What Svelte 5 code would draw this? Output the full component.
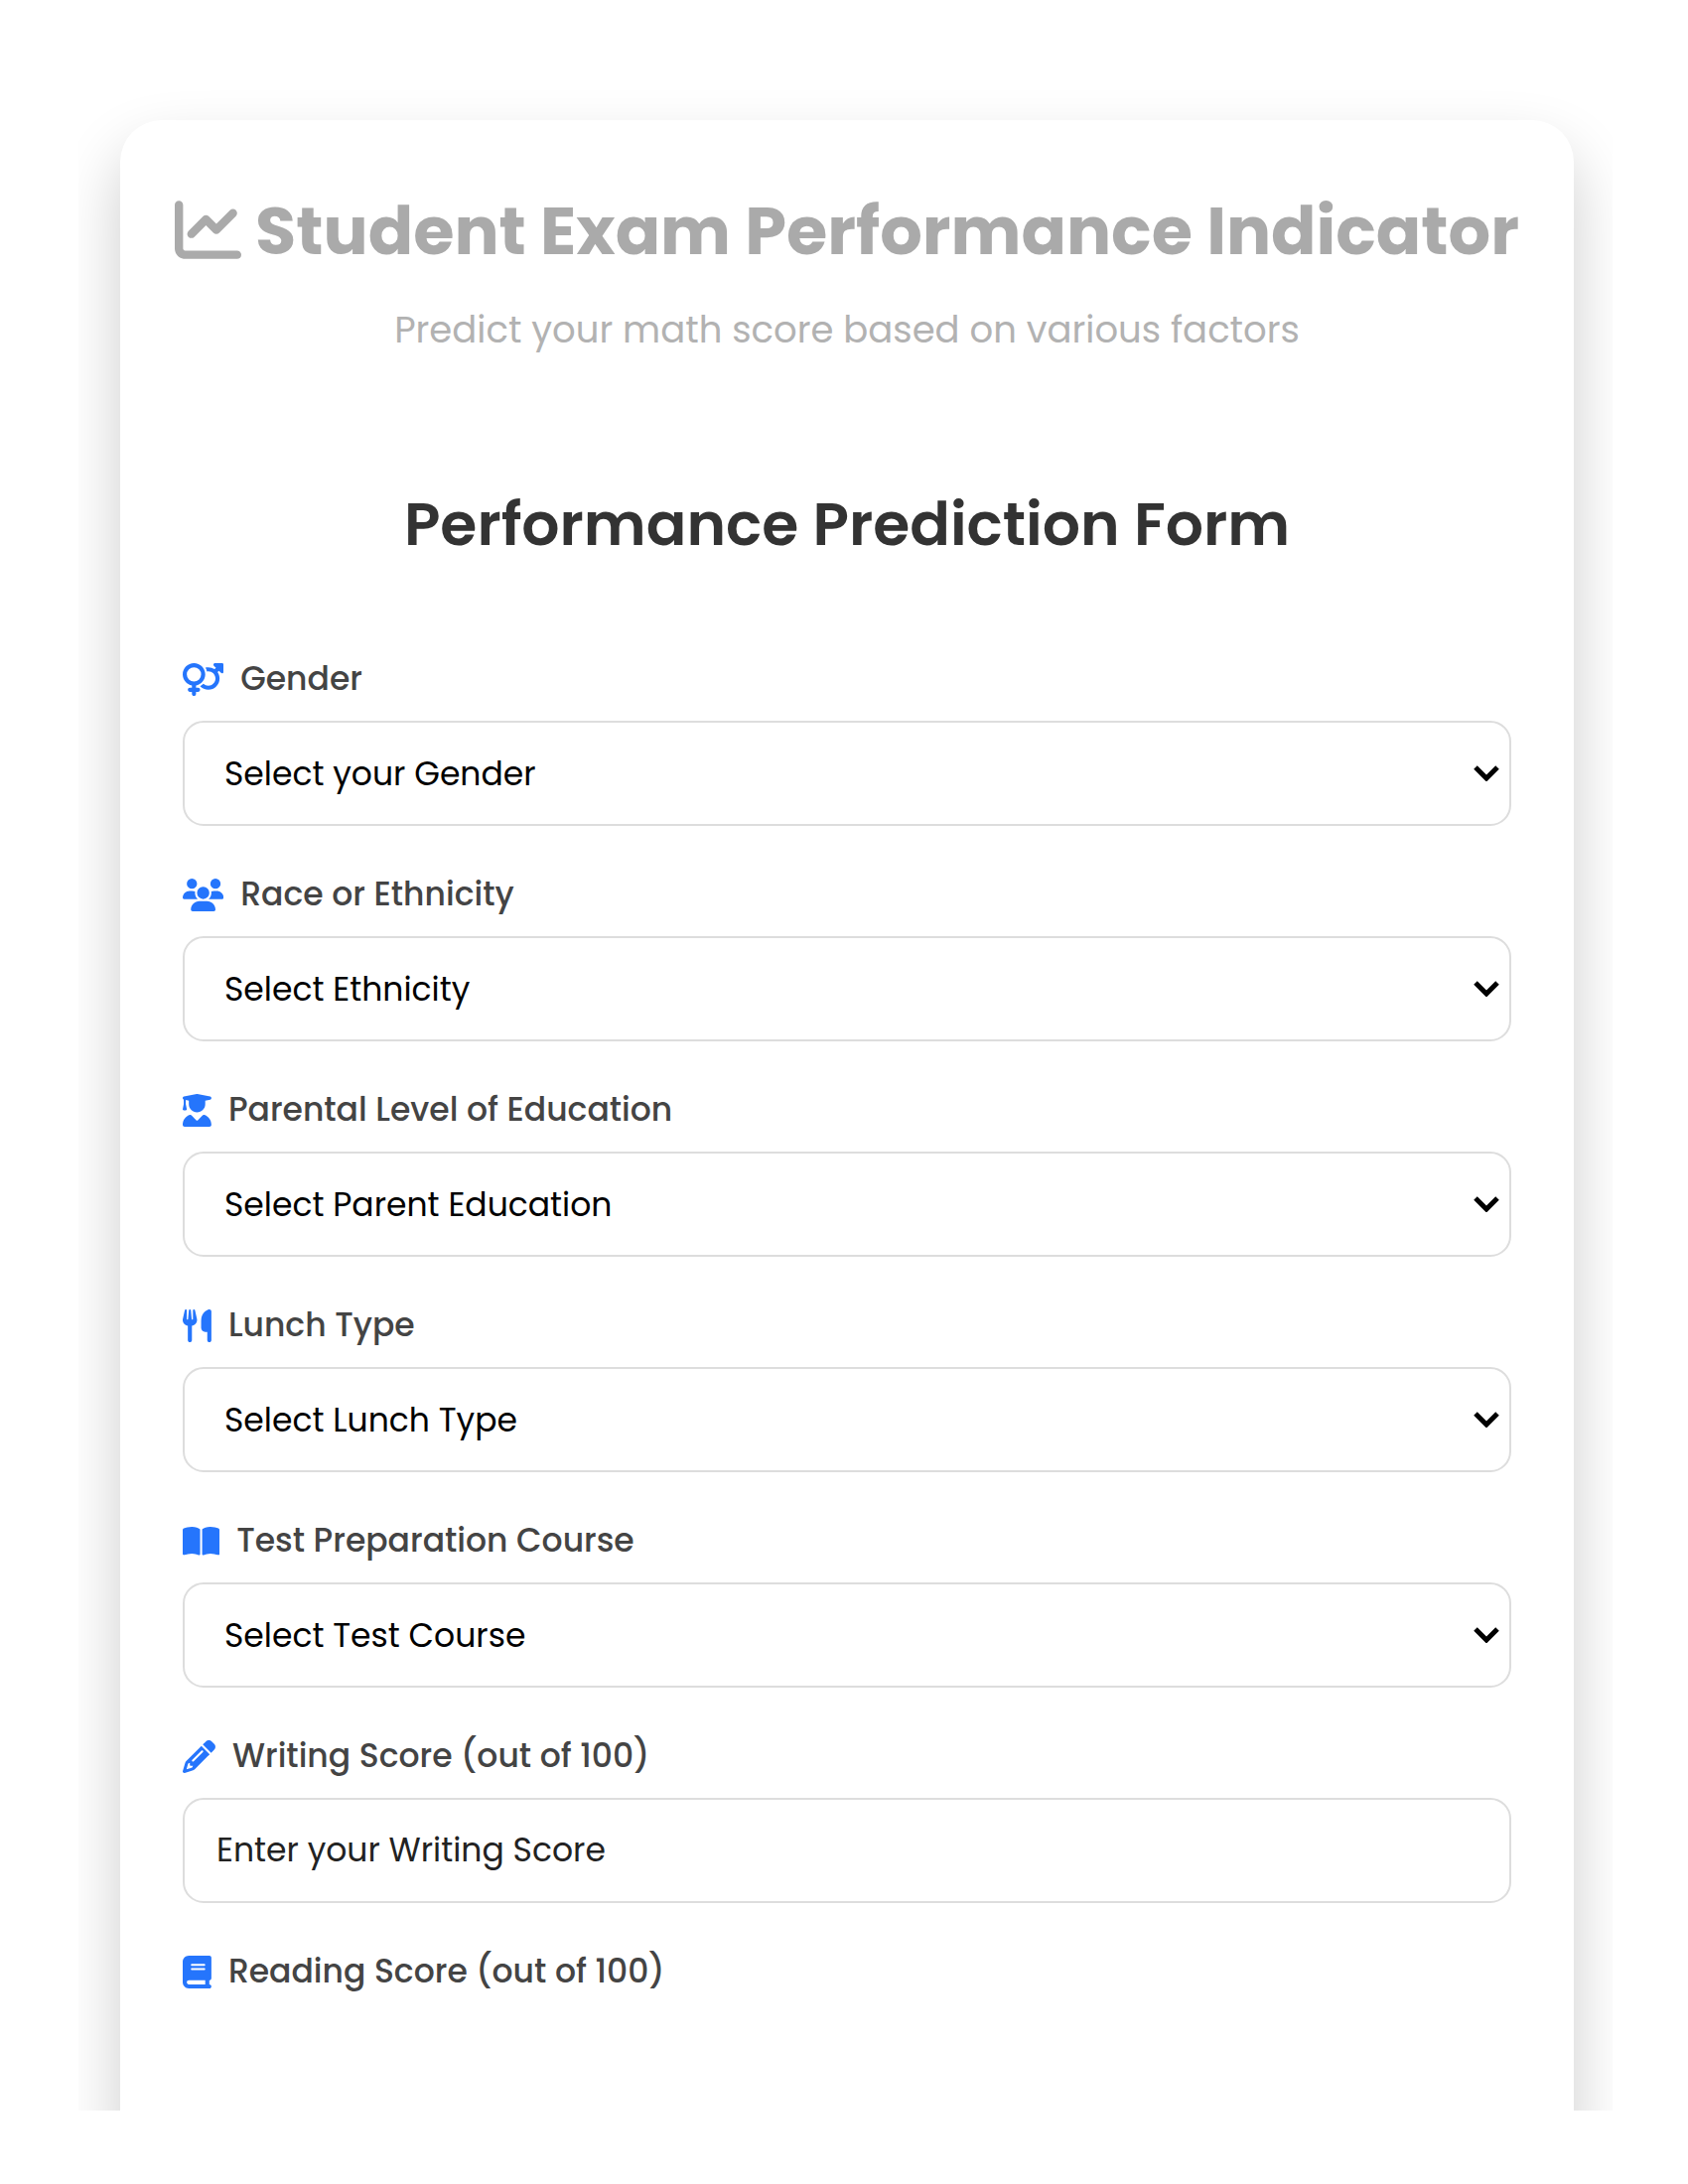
<script>
  const icons = {
    chart: { w: 512, d: 'M64 64c0-17.7-14.3-32-32-32S0 46.3 0 64V400c0 44.2 35.8 80 80 80H480c17.7 0 32-14.3 32-32s-14.3-32-32-32H80c-8.8 0-16-7.2-16-16V64zm406.6 86.6c12.5-12.5 12.5-32.8 0-45.3s-32.8-12.5-45.3 0L320 210.7l-57.4-57.4c-12.5-12.5-32.8-12.5-45.3 0l-112 112c-12.5 12.5-12.5 32.8 0 45.3s32.8 12.5 45.3 0L240 221.3l57.4 57.4c12.5 12.5 32.8 12.5 45.3 0l128-128z' },
    gender: { w: 640, d: 'M176 288a112 112 0 1 0 0-224 112 112 0 1 0 0 224zM352 176c0 86.3-62.1 158.1-144 173.1V384h32c17.7 0 32 14.3 32 32s-14.3 32-32 32H208v32c0 17.7-14.3 32-32 32s-32-14.3-32-32V448H112c-17.7 0-32-14.3-32-32s14.3-32 32-32h32V349.1C62.1 334.1 0 262.3 0 176C0 78.8 78.8 0 176 0s176 78.8 176 176zM271.9 360.6c19.3-10.1 36.9-23.1 52.1-38.4c20 18.5 46.7 29.8 76.1 29.8c61.9 0 112-50.1 112-112s-50.1-112-112-112c-7.2 0-14.3 .7-21.1 2c-4.9-21.5-13-41.7-24-60.2C369.3 66 384.4 64 400 64c37 0 71.4 11.4 99.8 31l20.6-20.6L487 41c-6.9-6.9-8.9-17.2-5.2-26.2S494.3 0 504 0H616c13.3 0 24 10.7 24 24V136c0 9.7-5.8 18.5-14.8 22.2s-19.3 1.7-26.2-5.2l-33.4-33.4L545 140.2c19.5 28.4 31 62.7 31 99.8c0 97.2-78.8 176-176 176c-50.5 0-96-21.3-128.1-55.4z' },
    users: { w: 640, d: 'M144 0a80 80 0 1 1 0 160A80 80 0 1 1 144 0zM512 0a80 80 0 1 1 0 160A80 80 0 1 1 512 0zM0 298.7C0 239.8 47.8 192 106.7 192h42.7c15.9 0 31 3.5 44.6 9.7c-1.3 7.2-1.9 14.7-1.9 22.3c0 38.2 16.8 72.5 43.3 96c-.2 0-.4 0-.7 0H21.3C9.6 320 0 310.4 0 298.7zM405.3 320c-.2 0-.4 0-.7 0c26.6-23.5 43.3-57.8 43.3-96c0-7.6-.7-15-1.9-22.3c13.6-6.3 28.7-9.7 44.6-9.7h42.7C592.2 192 640 239.8 640 298.7c0 11.8-9.6 21.3-21.3 21.3H405.3zM224 224a96 96 0 1 1 192 0 96 96 0 1 1 -192 0zM128 485.3C128 411.7 187.7 352 261.3 352H378.7C452.3 352 512 411.7 512 485.3c0 14.7-11.9 26.7-26.7 26.7H154.7c-14.7 0-26.7-11.9-26.7-26.7z' },
    graduate: { w: 448, d: 'M219.3 .5c3.1-.6 6.3-.6 9.4 0l200 40C439.9 42.7 448 52.6 448 64s-8.1 21.3-19.3 23.5L352 102.9V160c0 70.7-57.3 128-128 128s-128-57.3-128-128V102.9L48 93.3v65.1l15.7 78.4c.9 4.7-.3 9.6-3.3 13.3s-7.6 5.9-12.4 5.9H16c-4.8 0-9.3-2.1-12.4-5.9s-4.3-8.6-3.3-13.3L16 158.4V86.6C6.5 83.3 0 74.3 0 64C0 52.6 8.1 42.7 19.3 40.5l200-40zM111.9 327.7c10.5-3.4 21.8 .4 29.4 8.5l71 75.5c6.3 6.7 17 6.7 23.3 0l71-75.5c7.6-8.1 18.9-11.9 29.4-8.5C401 348.6 448 409.4 448 481.3c0 17-13.8 30.7-30.7 30.7H30.7C13.8 512 0 498.2 0 481.3c0-71.9 47-132.7 111.9-153.6z' },
    utensils: { w: 448, d: 'M416 0C400 0 288 32 288 176V288c0 35.3 28.7 64 64 64h32V480c0 17.7 14.3 32 32 32s32-14.3 32-32V352 240 32c0-17.7-14.3-32-32-32zM64 16C64 7.8 57.9 1 49.7 .1S34.2 4.6 32.4 12.5L2.1 148.8C.7 155.1 0 161.5 0 167.9c0 45.9 35.1 83.6 80 87.7V480c0 17.7 14.3 32 32 32s32-14.3 32-32V255.6c44.9-4.1 80-41.8 80-87.7c0-6.4-.7-12.8-2.1-19.1L191.6 12.5c-1.8-8-9.3-13.3-17.4-12.4S160 7.8 160 16V150.2c0 5.4-4.4 9.8-9.8 9.8c-5.1 0-9.3-3.9-9.8-9L127.9 14.6C127.2 6.3 120.3 0 112 0s-15.2 6.3-15.9 14.6L83.7 151c-.5 5.1-4.7 9-9.8 9c-5.4 0-9.8-4.4-9.8-9.8V16z' },
    open: { w: 576, d: 'M249.6 471.5c10.8 3.8 22.4-4.1 22.4-15.5V78.6c0-4.2-1.6-8.4-5-11C247.4 52 202.4 32 144 32C93.5 32 46.3 45.3 18.1 56.1C6.8 60.5 0 71.7 0 83.8V454.1c0 11.9 12.8 20.2 24.1 16.5C55.6 460.1 105.5 448 144 448c33.9 0 79 14 105.6 23.5zm76.8 0C353 462 398.1 448 432 448c38.5 0 88.4 12.1 119.9 22.6c11.3 3.8 24.1-4.6 24.1-16.5V83.8c0-12.1-6.8-23.3-18.1-27.6C529.7 45.3 482.5 32 432 32c-58.4 0-103.4 20-123 35.6c-3.3 2.6-5 6.8-5 11V456c0 11.4 11.7 19.3 22.4 15.5z' },
    pencil: { w: 512, d: 'M410.3 231l11.3-11.3-33.9-33.9-62.1-62.1L291.7 89.8l-11.3 11.3-22.6 22.6L58.6 322.9c-10.4 10.4-18 23.3-22.2 37.4L1 480.7c-2.5 8.4-.2 17.5 6.1 23.7s15.3 8.5 23.7 6.1l120.3-35.4c14.1-4.2 27-11.8 37.4-22.2L387.7 253.7 410.3 231zM160 399.4l-9.1 22.7c-4 3.1-8.5 5.4-13.3 6.9L59.4 452l23-78.1c1.4-4.9 3.8-9.4 6.9-13.3l22.7-9.1v32c0 8.8 7.2 16 16 16h32zM362.7 18.7L348.3 33.2 325.7 55.8 314.3 67.1l33.9 33.9 62.1 62.1 33.9 33.9 11.3-11.3 22.6-22.6 14.5-14.5c25-25 25-65.5 0-90.5L453.3 18.7c-25-25-65.5-25-90.5 0zm-47.4 168l-144 144c-6.2 6.2-16.4 6.2-22.6 0s-6.2-16.4 0-22.6l144-144c6.2-6.2 16.4-6.2 22.6 0s6.2 16.4 0 22.6z' },
    book: { w: 448, d: 'M96 0C43 0 0 43 0 96V416c0 53 43 96 96 96H384h32c17.7 0 32-14.3 32-32s-14.3-32-32-32V384c17.7 0 32-14.3 32-32V32c0-17.7-14.3-32-32-32H384 96zm0 384H352v64H96c-17.7 0-32-14.3-32-32s14.3-32 32-32zm32-240c0-8.8 7.2-16 16-16H336c8.8 0 16 7.2 16 16s-7.2 16-16 16H144c-8.8 0-16-7.2-16-16zm16 48H336c8.8 0 16 7.2 16 16s-7.2 16-16 16H144c-8.8 0-16-7.2-16-16s7.2-16 16-16z' }
  };

  const selects = [
    { id: 'gender', icon: 'gender', label: 'Gender', prompt: 'Select your Gender' },
    { id: 'ethnicity', icon: 'users', label: 'Race or Ethnicity', prompt: 'Select Ethnicity' },
    { id: 'education', icon: 'graduate', label: 'Parental Level of Education', prompt: 'Select Parent Education' },
    { id: 'lunch', icon: 'utensils', label: 'Lunch Type', prompt: 'Select Lunch Type' },
    { id: 'course', icon: 'open', label: 'Test Preparation Course', prompt: 'Select Test Course' }
  ];
</script>

{#snippet glyph(name)}
  <svg class="icon" viewBox="0 0 {icons[name].w} 512" aria-hidden="true"><path d={icons[name].d} /></svg>
{/snippet}

<div class="stage">
  <main class="card">
    <header>
      <h1>{@render glyph('chart')}<span>Student Exam Performance Indicator</span></h1>
      <p>Predict your math score based on various factors</p>
    </header>

    <form>
      <h2>Performance Prediction Form</h2>

      {#each selects as field}
        <div class="field">
          <label for={field.id}>{@render glyph(field.icon)}<span>{field.label}</span></label>
          <div class="control">
            <select id={field.id}>
              <option value="">{field.prompt}</option>
            </select>
            <svg class="chevron" viewBox="0 0 26 16" aria-hidden="true"><path d="M2 2l11 11L24 2" /></svg>
          </div>
        </div>
      {/each}

      <div class="field">
        <label for="writing">{@render glyph('pencil')}<span>Writing Score (out of 100)</span></label>
        <div class="control">
          <input id="writing" type="text" inputmode="numeric" placeholder="Enter your Writing Score" />
        </div>
      </div>

      <div class="field">
        <div class="label">{@render glyph('book')}<span>Reading Score (out of 100)</span></div>
      </div>
    </form>
  </main>
</div>

<style>
  :global(body) {
    background: #fff;
    font-family: Poppins, Inter, 'Open Sans', sans-serif;
  }
  .stage {
    margin: 0 76px 0 79px;
    padding: 121px 39px 0 42px;
    overflow: hidden;
  }
  .card {
    box-sizing: border-box;
    margin-bottom: -50px;
    padding: 64px 63px 121px;
    border-radius: 42px;
    background: #fff;
    box-shadow: 0 31px 63px rgba(0, 0, 0, 0.2);
  }
  header {
    margin-bottom: 124px;
    text-align: center;
  }
  h1 {
    display: flex;
    justify-content: center;
    align-items: center;
    gap: 14px;
    margin: 0 0 23px;
    font-size: 67px;
    line-height: 96px;
    font-weight: 700;
    white-space: nowrap;
    color: #aaa;
  }
  h1 .icon,
  h1 :global(.icon) {
    margin-bottom: 4px;
  }
  p {
    margin: 0;
    font-size: 37px;
    line-height: 56px;
    color: #b2b2b2;
  }
  h2 {
    margin: 0 0 87px;
    font-size: 60px;
    line-height: 88px;
    font-weight: 600;
    text-align: center;
    color: #333;
  }
  .icon {
    flex: none;
    height: 1em;
    fill: currentColor;
  }
  .field {
    margin-bottom: 44px;
  }
  label,
  .label {
    display: flex;
    align-items: center;
    gap: 17px;
    margin-bottom: 17px;
    font-size: 33px;
    line-height: 50px;
    font-weight: 500;
    color: #444;
  }
  label .icon,
  .label .icon {
    color: #2575fc;
  }
  .control {
    display: grid;
    align-items: center;
  }
  select,
  input {
    grid-area: 1 / 1;
    box-sizing: border-box;
    width: 100%;
    height: 106px;
    margin: 0;
    border: 2px solid #ddd;
    border-radius: 21px;
    background: #fff;
    font: inherit;
    font-size: 33px;
    color: #000;
    appearance: none;
  }
  select {
    padding: 0 60px 0 40px;
  }
  input {
    padding: 0 32px;
  }
  input::placeholder {
    color: #222;
    opacity: 1;
  }
  .chevron {
    grid-area: 1 / 1;
    justify-self: end;
    width: 26px;
    height: 16px;
    margin-right: 12px;
    fill: none;
    stroke: #000;
    stroke-width: 5;
    pointer-events: none;
  }
</style>
